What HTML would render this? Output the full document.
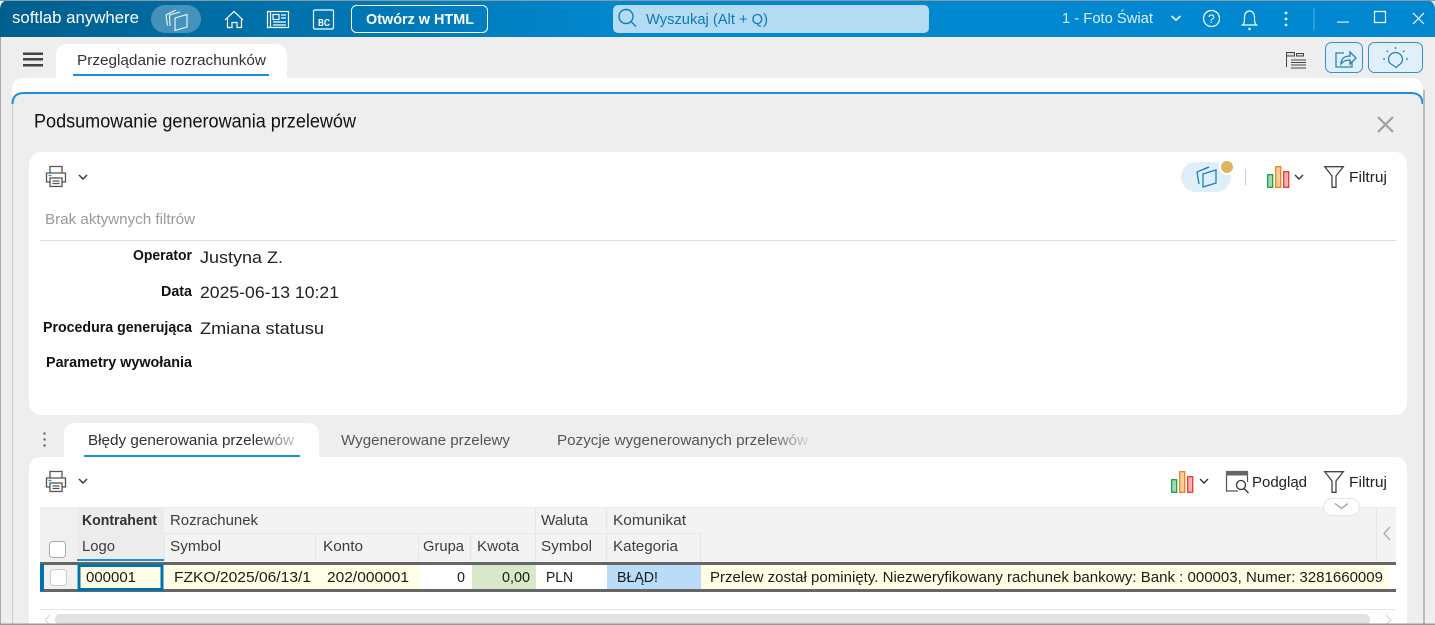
<!DOCTYPE html>
<html lang="pl"><head><meta charset="utf-8"><title>Podsumowanie generowania przelewów</title>
<style>
html,body{margin:0;padding:0;width:1435px;height:625px;overflow:hidden;background:#eee}
svg{display:block}
text{font-family:"Liberation Sans",sans-serif;font-size:15px;fill:#222}
.b{font-weight:bold}
.h{fill:#3c3c3c;font-size:15px}
.v{font-size:17px;fill:#222}
.c{fill:#1c1c1c;font-size:15px}
</style></head><body>
<svg width="1435" height="625" viewBox="0 0 1435 625" xmlns="http://www.w3.org/2000/svg">
<defs>
<linearGradient id="tb" x1="0" x2="1" y1="0" y2="0"><stop offset="0" stop-color="#005f8e"/><stop offset=".35" stop-color="#0180c2"/><stop offset=".45" stop-color="#0288d1"/><stop offset="1" stop-color="#0288d1"/></linearGradient>
<linearGradient id="f1" gradientUnits="userSpaceOnUse" x1="255" x2="296" y1="0" y2="0"><stop offset="0" stop-color="#333"/><stop offset="1" stop-color="#ccc"/></linearGradient>
<linearGradient id="f2" gradientUnits="userSpaceOnUse" x1="770" x2="810" y1="0" y2="0"><stop offset="0" stop-color="#555"/><stop offset="1" stop-color="#ddd"/></linearGradient>
<g id="printer" fill="none" stroke="#555" stroke-width="1.3">
<path d="M5 8V1.5h12V8"/><path d="M5 17H1.5V8h19v9H17"/><rect x="5" y="13" width="12" height="8.5"/><path d="M7.5 16h7M7.5 18.5h7"/><path d="M3.5 10.5h3" stroke="#1a90d8"/>
</g>
<path id="chev" d="M0 0l4 4 4-4" fill="none" stroke="#333" stroke-width="1.4"/>
<g id="chart" stroke-width="1.3">
<rect x=".7" y="8.7" width="5" height="12.6" fill="#a8d8b4" stroke="#16a34a"/>
<rect x="8.7" y=".7" width="5" height="20.6" fill="#fbd09a" stroke="#f07f1e"/>
<rect x="16.7" y="5.7" width="5" height="15.6" fill="#f8b0b0" stroke="#e53935"/>
</g>
<path id="filter" d="M.7.7h18.6l-7.3 9.3v11.3h-4V10z" fill="none" stroke="#444" stroke-width="1.3"/>
</defs>

<rect width="1435" height="625" fill="#eee"/>
<path d="M0 37V10Q0 0 10 0H1425Q1435 0 1435 10V37Z" fill="url(#tb)"/>
<rect x="0" y="0" width="1435" height="1" fill="#8a9aa4"/>
<rect x="0" y="37" width="1" height="588" fill="#aaa"/>

<!-- title bar -->
<text x="12" y="23" textLength="127" lengthAdjust="spacingAndGlyphs" style="font-size:17px;fill:#fff">softlab anywhere</text>
<rect x="151" y="5" width="50" height="28" rx="14" fill="#fff" fill-opacity=".27"/>
<g fill="none" stroke="#fff" stroke-opacity=".92" stroke-width="1.100">
<path d="M175 18l12-3.500v12.500l-12 3.500z"/>
<path d="M170 26l-.5-11 10.500-3"/>
<path d="M167.500 25.500l-1.500-10.500 10-5"/>
</g>
<g fill="none" stroke="#fff" stroke-width="1.200">
<path d="M225 20l9-8.500 9 8.500M227.500 18v9.500h4.500v-5h5v5h4.500V18"/>
<rect x="267.500" y="11.500" width="21" height="16"/><path d="M270.500 11.500v16"/><rect x="273" y="14.500" width="6" height="5"/><path d="M281 15h5M281 18h5M273 22h13M273 25h13"/>
<rect x="313.500" y="10" width="20" height="19" rx="1.500"/>
</g>
<text x="318" y="26" textLength="12" lengthAdjust="spacingAndGlyphs" class="b" style="font-size:10px;fill:#fff">BC</text>
<rect x="351.500" y="5.500" width="136" height="27" rx="5" fill="none" stroke="#fff"/>
<text x="366" y="24" textLength="108" lengthAdjust="spacingAndGlyphs" class="b" style="fill:#fff">Otwórz w HTML</text>
<rect x="613" y="5" width="316" height="28" rx="5" fill="#b3dcf3"/>
<circle cx="626" cy="16.500" r="7" fill="none" stroke="#0c7fb8" stroke-width="1.400"/><path d="M631 21.500l5 5" stroke="#0c7fb8" stroke-width="1.400"/>
<text x="646" y="24" textLength="122" lengthAdjust="spacingAndGlyphs" style="fill:#0c7ab4">Wyszukaj (Alt + Q)</text>
<text x="1062" y="23" textLength="91" lengthAdjust="spacingAndGlyphs" style="fill:#e1f0fa">1 - Foto Świat</text>
<path d="M1171.500 16l4.500 4 4.500-4" fill="none" stroke="#e1f0fa" stroke-width="1.800"/>
<circle cx="1211.500" cy="18.500" r="8" fill="none" stroke="#fff" stroke-width="1.200"/>
<text x="1208" y="23" style="font-size:12px;fill:#fff">?</text>
<path d="M1242.500 25c2-1.500 2-3 2-8 0-3.500 2-6 5-6s5 2.500 5 6c0 5 0 6.500 2 8z" fill="none" stroke="#fff" stroke-width="1.200"/><circle cx="1249.500" cy="29" r="1.200" fill="#fff"/>
<g fill="#e1f0fa"><circle cx="1286" cy="13" r="1.400"/><circle cx="1286" cy="19" r="1.400"/><circle cx="1286" cy="25" r="1.400"/></g>
<rect x="1313" y="8" width="2" height="22" fill="#2a9ad8"/>
<rect x="1337" y="21.500" width="12" height="1.200" fill="#e1f0fa"/>
<rect x="1374.500" y="11.500" width="11" height="11" fill="none" stroke="#fff" stroke-width="1.200"/>
<path d="M1413 13l11 11M1424 13l-11 11" stroke="#fff" stroke-width="1.200"/>

<!-- top tab row -->
<rect x="23" y="52.500" width="20" height="2.500" fill="#444"/><rect x="23" y="58" width="20" height="2.500" fill="#444"/><rect x="23" y="64" width="20" height="2.500" fill="#444"/>
<path d="M56 78V56Q56 44 68 44H275Q287 44 287 56V78Z" fill="#fff"/>
<text x="77" y="65" textLength="189" lengthAdjust="spacingAndGlyphs" style="fill:#333">Przeglądanie rozrachunków</text>
<rect x="73" y="74" width="196" height="2" fill="#1a90d8"/>
<g fill="none" stroke="#444"><path d="M1286.500 53v14"/><rect x="1286.500" y="52.500" width="8" height="3.500" fill="#ddd"/><rect x="1296.500" y="53.500" width="7" height="2.500" fill="#ddd"/><path d="M1291 60h15M1291 62.500h15M1291 65h15M1291 68h15"/></g>
<rect x="1325.500" y="42.500" width="37" height="30" rx="6" fill="#dff0fa" stroke="#3a8fc0"/>
<path d="M1344 53h-8v14h16v-6" fill="none" stroke="#3a7fa8" stroke-width="1.300"/><path d="M1341 64c0-5 3-8 9-8v-4l6 6-6 6v-4c-4 0-7 1-9 4z" fill="none" stroke="#2a7fb0" stroke-width="1.300"/>
<rect x="1368.500" y="42.500" width="54" height="30" rx="6" fill="#dff0fa" stroke="#3a8fc0"/>
<g fill="none" stroke="#1a80bc" stroke-width="1.200"><path d="M1396 68c0-2.500-7.500-3-7.500-8.500a7 7 0 0 1 14 0c0 5-6 6-6.500 8.500z"/><path d="M1395.500 47v2M1386.500 50.500l1.500 1.500M1404.500 50.500l-1.500 1.500M1383 59h2M1406 59h2"/></g>

<!-- main panel and dialog -->
<path d="M12 625V90Q12 78 24 78H1411Q1423 78 1423 90V625Z" fill="#fff"/>
<path d="M12 625V104Q12 92 24 92H1411Q1423 92 1423 104V625Z" fill="#eee"/>
<path d="M12.500 104Q12.500 93 24 93H1411Q1422.500 93 1422.500 104" fill="none" stroke="#1a90d8" stroke-width="2"/>
<rect x="12" y="104" width="1" height="521" fill="#ccc"/>
<rect x="1423" y="90" width="2" height="535" fill="#bbb"/>
<text x="34" y="127.500" textLength="322" lengthAdjust="spacingAndGlyphs" style="font-size:19px;fill:#111">Podsumowanie generowania przelewów</text>
<path d="M1378 117l15 15M1393 117l-15 15" stroke="#a0a0a0" stroke-width="2.200"/>

<!-- summary card -->
<rect x="29" y="152" width="1378" height="263" rx="12" fill="#fff"/>
<use href="#printer" x="45" y="165"/>
<use href="#chev" x="79" y="175"/>
<rect x="1181" y="162" width="50" height="30" rx="15" fill="#dfeffa"/>
<g fill="none" stroke="#1a80bc" stroke-width="1.300"><path d="M1203 174l13-4v13l-13 4z"/><path d="M1199 184l-2-12 12-5"/><path d="M1203 169.500l6-2.500"/></g>
<circle cx="1227" cy="167" r="8" fill="#fff"/><circle cx="1227" cy="167" r="6" fill="#e0b45f"/>
<rect x="1245" y="169" width="1" height="16" fill="#c8c8c8"/>
<use href="#chart" x="1267" y="166"/>
<use href="#chev" x="1295" y="175"/>
<use href="#filter" x="1324" y="166"/>
<text x="1349" y="182" textLength="38" lengthAdjust="spacingAndGlyphs">Filtruj</text>
<text x="45" y="224" textLength="150" lengthAdjust="spacingAndGlyphs" style="fill:#999">Brak aktywnych filtrów</text>
<rect x="40" y="240" width="1356" height="1" fill="#ddd"/>
<text x="133" y="260" textLength="59" lengthAdjust="spacingAndGlyphs" class="b" style="fill:#111;font-size:14.500px">Operator</text>
<text x="161" y="296" textLength="31" lengthAdjust="spacingAndGlyphs" class="b" style="fill:#111;font-size:14.500px">Data</text>
<text x="43" y="332" textLength="149" lengthAdjust="spacingAndGlyphs" class="b" style="fill:#111;font-size:14.500px">Procedura generująca</text>
<text x="46" y="367" textLength="146" lengthAdjust="spacingAndGlyphs" class="b" style="fill:#111;font-size:14.500px">Parametry wywołania</text>
<text x="200" y="263" textLength="83" lengthAdjust="spacingAndGlyphs" class="v">Justyna Z.</text>
<text x="200" y="298" textLength="139" lengthAdjust="spacingAndGlyphs" class="v">2025-06-13 10:21</text>
<text x="200" y="334" textLength="124" lengthAdjust="spacingAndGlyphs" class="v">Zmiana statusu</text>

<!-- lower tabs -->
<g fill="#666"><circle cx="44.500" cy="433.500" r="1.200"/><circle cx="44.500" cy="439.500" r="1.200"/><circle cx="44.500" cy="445.500" r="1.200"/></g>
<path d="M64 458V435Q64 423 76 423H307Q319 423 319 435V458Z" fill="#fff"/>
<text x="88" y="445" textLength="206" lengthAdjust="spacingAndGlyphs" style="fill:url(#f1)">Błędy generowania przelewów</text>
<rect x="84" y="455" width="216" height="2" fill="#1a90d8"/>
<text x="341" y="445" textLength="169" lengthAdjust="spacingAndGlyphs" style="fill:#555">Wygenerowane przelewy</text>
<text x="557" y="445" textLength="251" lengthAdjust="spacingAndGlyphs" style="fill:url(#f2)">Pozycje wygenerowanych przelewów</text>

<!-- lower card -->
<path d="M29 625V469Q29 457 41 457H1395Q1407 457 1407 469V625Z" fill="#fff"/>
<use href="#printer" x="45" y="470"/>
<use href="#chev" x="79" y="479"/>
<use href="#chart" x="1171" y="471"/>
<use href="#chev" x="1200" y="479"/>
<g fill="none" stroke="#555" stroke-width="1.200"><path d="M1238 491h-11.500v-19.500h21V482"/></g><rect x="1226" y="471" width="22" height="4.500" fill="#666"/>
<circle cx="1241" cy="485" r="4.500" fill="none" stroke="#333" stroke-width="1.300"/><path d="M1244 488.500l4.500 4.500" stroke="#333" stroke-width="1.300"/>
<text x="1252" y="487" textLength="55" lengthAdjust="spacingAndGlyphs">Podgląd</text>
<use href="#filter" x="1324" y="471"/>
<text x="1349" y="487" textLength="38" lengthAdjust="spacingAndGlyphs">Filtruj</text>

<!-- table header -->
<rect x="40" y="507" width="1356" height="55" fill="#f3f3f3"/>
<rect x="40" y="507" width="1356" height="1" fill="#ececec"/>
<rect x="40" y="507" width="36" height="55" fill="#f0f0f0"/>
<rect x="77" y="508" width="87" height="51" fill="#ececec"/>
<rect x="77" y="559" width="88" height="2" fill="#1a90d8"/>
<g fill="#e6e6e6">
<rect x="164" y="533" width="537" height="1"/>
<rect x="164" y="533" width="1" height="29"/><rect x="315" y="533" width="1" height="29"/><rect x="418" y="533" width="1" height="29"/><rect x="470" y="533" width="1" height="29"/>
<rect x="535" y="508" width="1" height="54"/><rect x="606" y="508" width="1" height="54"/><rect x="700" y="533" width="1" height="29"/><rect x="1376" y="508" width="1" height="54"/>
</g>
<text x="82" y="525" textLength="75" lengthAdjust="spacingAndGlyphs" class="b" style="fill:#333;font-size:14.500px">Kontrahent</text>
<text x="170" y="525" textLength="88" lengthAdjust="spacingAndGlyphs" class="h">Rozrachunek</text>
<text x="541" y="525" textLength="47" lengthAdjust="spacingAndGlyphs" class="h">Waluta</text>
<text x="613" y="525" textLength="73" lengthAdjust="spacingAndGlyphs" class="h">Komunikat</text>
<text x="82" y="551" textLength="33" lengthAdjust="spacingAndGlyphs" class="h">Logo</text>
<text x="170" y="551" textLength="51" lengthAdjust="spacingAndGlyphs" class="h">Symbol</text>
<text x="323" y="551" textLength="40" lengthAdjust="spacingAndGlyphs" class="h">Konto</text>
<text x="423" y="551" textLength="41" lengthAdjust="spacingAndGlyphs" class="h">Grupa</text>
<text x="477" y="551" textLength="42" lengthAdjust="spacingAndGlyphs" class="h">Kwota</text>
<text x="541" y="551" textLength="51" lengthAdjust="spacingAndGlyphs" class="h">Symbol</text>
<text x="613" y="551" textLength="65" lengthAdjust="spacingAndGlyphs" class="h">Kategoria</text>
<rect x="49.500" y="541.500" width="16" height="16" rx="3" fill="#fff" stroke="#aaa"/>
<path d="M1390 527l-6 6.500 6 6.500" fill="none" stroke="#aaa" stroke-width="1.300"/>
<rect x="1323.500" y="498.500" width="36" height="17" rx="8.500" fill="#fff" stroke="#e4e4e4"/>
<path d="M1335 503.500l6.500 5 6.500-5" fill="none" stroke="#aaa" stroke-width="1.500"/>

<!-- row -->
<rect x="40" y="565" width="37" height="24" fill="#f0f0f0"/>
<rect x="165" y="565" width="255" height="24" fill="#ffffe6"/>
<rect x="472" y="565" width="64" height="24" fill="#d9e8c8"/>
<rect x="607" y="565" width="94" height="24" fill="#b9dcf9"/>
<rect x="701" y="565" width="687" height="24" fill="#ffffe6"/>
<rect x="40" y="562" width="1356" height="3" fill="#666"/>
<rect x="40" y="589" width="1356" height="3" fill="#666"/>
<rect x="40" y="564" width="4" height="27" fill="#0073aa"/>
<rect x="79" y="565.500" width="83" height="24" fill="#ffffe6" stroke="#0073aa" stroke-width="3"/>
<rect x="50.500" y="569.500" width="16" height="16" rx="3" fill="#fff" stroke="#ccc"/>
<text x="86" y="582" textLength="50" lengthAdjust="spacingAndGlyphs" class="c">000001</text>
<text x="174" y="582" textLength="137" lengthAdjust="spacingAndGlyphs" class="c">FZKO/2025/06/13/1</text>
<text x="327" y="582" textLength="82" lengthAdjust="spacingAndGlyphs" class="c">202/000001</text>
<text x="457" y="582" textLength="8" lengthAdjust="spacingAndGlyphs" class="c">0</text>
<text x="502" y="582" textLength="28" lengthAdjust="spacingAndGlyphs" class="c">0,00</text>
<text x="546" y="582" textLength="27" lengthAdjust="spacingAndGlyphs" class="c">PLN</text>
<text x="617" y="582" textLength="41" lengthAdjust="spacingAndGlyphs" class="c">BŁĄD!</text>
<text x="710" y="582" textLength="673" lengthAdjust="spacingAndGlyphs" class="c">Przelew został pominięty. Niezweryfikowany rachunek bankowy: Bank : 000003, Numer: 3281660009</text>

<!-- footer / scrollbar -->
<rect x="40" y="609" width="1356" height="1" fill="#e4e4e4"/>
<rect x="55" y="614" width="1315" height="11" rx="5" fill="#e2e2e2"/>
<path d="M50 615l-5 5 5 5M1386 615l5 5-5 5" fill="none" stroke="#ddd" stroke-width="1.300"/>
<rect x="0" y="623.500" width="1435" height="1.500" fill="#999"/>
</svg>
</body></html>
